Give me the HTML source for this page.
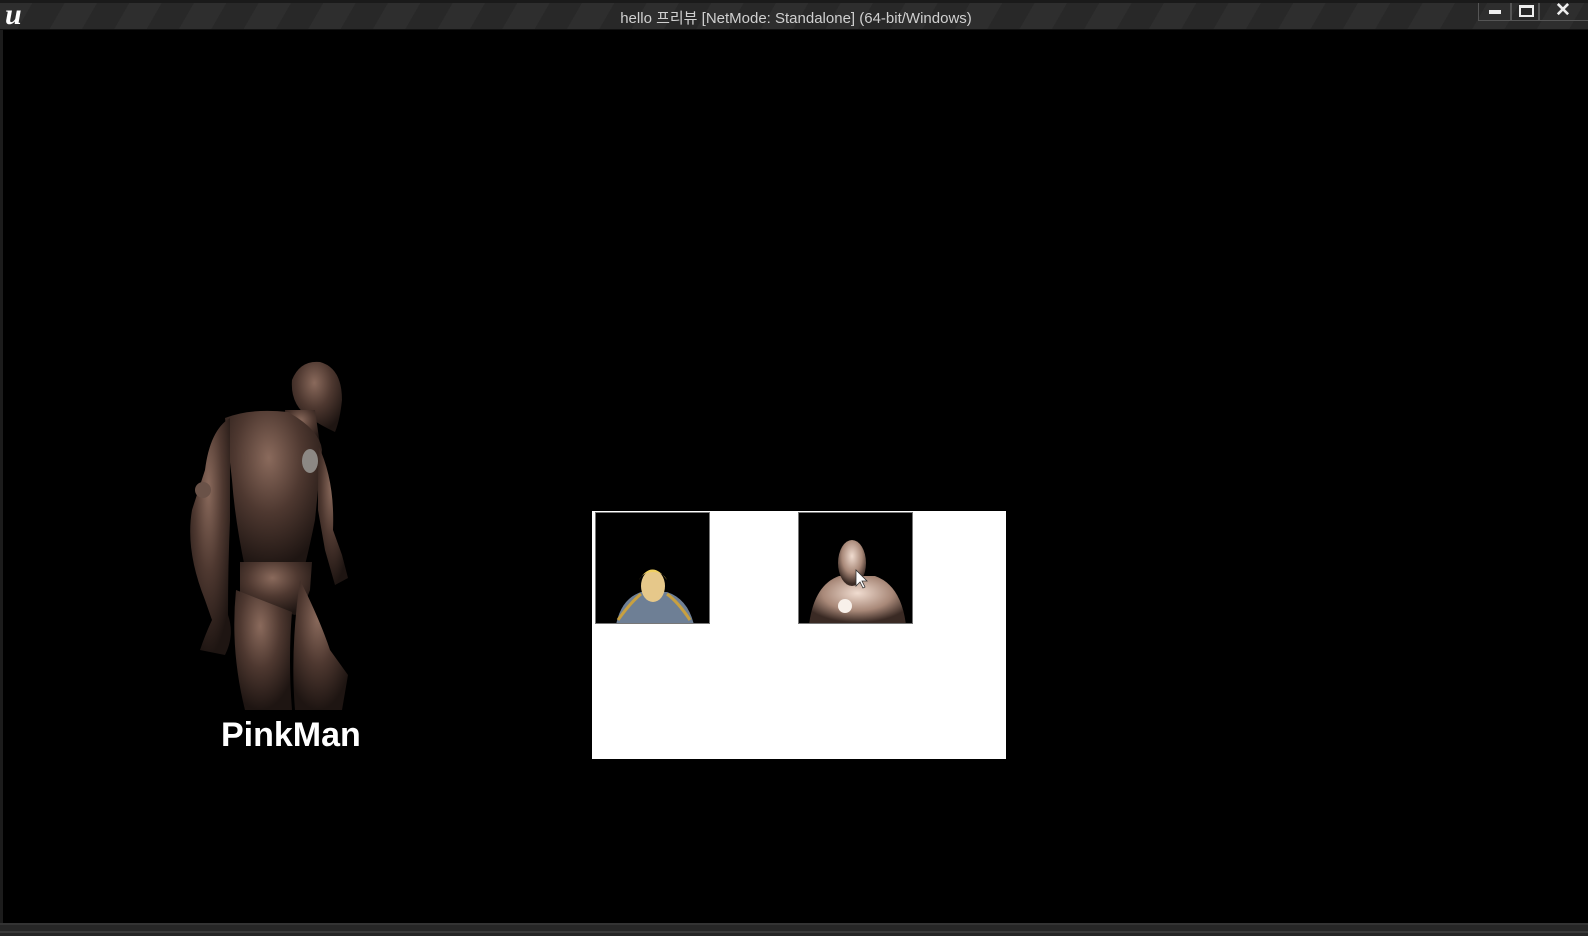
<!DOCTYPE html>
<html><head><meta charset="utf-8"><style>
html,body{margin:0;padding:0;width:1588px;height:936px;overflow:hidden;background:#000;font-family:"Liberation Sans","Noto Sans CJK KR",sans-serif}
#tb{position:absolute;left:0;top:0;width:1588px;height:30px;background:repeating-linear-gradient(120deg,#2e2e2e 0 28px,#282828 28px 56px);border-top:3px solid #1a1a1a;box-sizing:border-box;border-bottom:1px solid #111}
#title{position:absolute;left:614px;width:364px;top:4px;text-align:center;color:#d0d0d0;font-size:15px;white-space:nowrap}
#logo{position:absolute;left:5px;top:-1px;color:#fff;font:bold 30px "Liberation Serif",serif;font-style:italic;line-height:26px}
.wb{position:absolute;top:0;height:18px;border:1px solid #555;border-top:none;box-sizing:border-box}
#bot{position:absolute;left:0;top:923px;width:1588px;height:13px;background:#262626;border-top:2px solid #333;box-sizing:border-box}
#bot:after{content:"";position:absolute;left:0;top:6px;width:100%;height:2px;background:#3a3a3a}
#lb{position:absolute;left:0;top:30px;width:3px;height:893px;background:#1c1c1c}
#panel{position:absolute;left:592px;top:511px;width:414px;height:248px;background:#fff}
.th{position:absolute;top:512px;width:115px;height:112px;background:#000;border:1px solid #777;box-sizing:border-box;overflow:hidden}
#name{position:absolute;left:221px;top:716px;color:#fff;font-weight:bold;font-size:34px}
</style></head><body>
<div id="tb"><div id="logo">u</div><div id="title">hello 프리뷰 [NetMode: Standalone] (64-bit/Windows)</div>
<div class="wb" style="left:1478px;width:33px"><div style="position:absolute;left:10px;top:7px;width:12px;height:4px;background:#eee"></div></div>
<div class="wb" style="left:1511px;width:28px"><div style="position:absolute;left:7px;top:2px;width:11px;height:7px;border:2px solid #eee;border-top-width:3px"></div></div>
<div class="wb" style="left:1539px;width:49px;border-right:none"><div style="position:absolute;left:15px;top:-4px;color:#eee;font:bold 19px 'Liberation Sans',sans-serif">✕</div></div>
</div>
<div id="lb"></div>
<svg style="position:absolute;left:170px;top:350px" width="200" height="360">
<defs><radialGradient id="br" cx="45%" cy="30%" r="70%"><stop offset="0" stop-color="#8a6a5c"/><stop offset=".5" stop-color="#4e3830"/><stop offset="1" stop-color="#1e1512"/></radialGradient></defs>
<g fill="url(#br)">
<path d="M122 30 Q130 10 150 12 Q172 18 172 50 Q170 70 165 82 Q150 75 140 68 Q120 55 122 30 Z"/>
<path d="M115 60 L145 60 L150 95 L118 95 Z"/>
<path d="M55 68 Q80 58 118 62 Q150 80 152 100 L145 170 Q140 195 135 215 L75 218 Q65 170 62 130 Z"/>
<path d="M60 68 Q40 80 35 120 L22 160 Q15 200 35 250 L42 270 Q35 285 30 300 L55 305 Q65 285 58 265 Q58 215 60 170 Z"/>
<path d="M148 95 Q165 130 163 180 L172 205 L178 228 L165 235 L155 200 L148 160 Z"/>
<path d="M70 212 L142 212 L140 240 Q132 262 125 265 L70 250 Z"/>
<path d="M66 240 L122 262 Q118 310 122 360 L75 360 Q60 300 66 240 Z"/>
<path d="M130 230 Q150 270 160 300 L178 325 L172 360 L125 360 Q120 300 130 230 Z"/>
</g>
<ellipse cx="140" cy="111" rx="8" ry="12" fill="#8c8884"/>
<circle cx="33" cy="140" r="8" fill="#6a5248"/>
</svg>
<div id="name">PinkMan</div>
<div id="panel"></div>
<div class="th" style="left:595px"><svg width="115" height="112">
<path d="M20 112 Q25 86 45 79 L71 79 Q92 86 98 112 Z" fill="#6e7f95"/>
<path d="M22 107 Q35 89 45 81 M94 107 Q82 89 71 81" stroke="#c8a040" stroke-width="3" fill="none"/>
<ellipse cx="57" cy="73" rx="12" ry="16" fill="#e6c88a"/>
<path d="M43 67 Q56 46 71 67 Q67 59 57 59 Q47 59 43 67" fill="#f0d060"/>
</svg></div>
<div class="th" style="left:798px"><svg width="115" height="112">
<defs><radialGradient id="pk" cx="50%" cy="35%" r="60%"><stop offset="0" stop-color="#f0dcd0"/><stop offset=".6" stop-color="#a88878"/><stop offset="1" stop-color="#3a2a24"/></radialGradient></defs>
<path d="M10 112 Q15 72 40 63 L76 63 Q102 72 107 112 Z" fill="url(#pk)"/>
<ellipse cx="53" cy="50" rx="14" ry="23" fill="url(#pk)"/>
<circle cx="46" cy="93" r="7" fill="#f8f0ea"/>
<path d="M57 57 L57 73 L61 69 L64 75 L66 74 L63 68 L68 68 Z" fill="#fff" stroke="#333" stroke-width=".8"/>
</svg></div>
<div id="bot"></div>
</body></html>
